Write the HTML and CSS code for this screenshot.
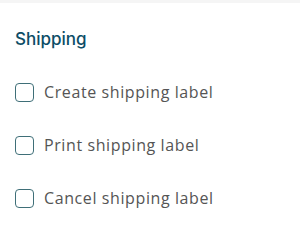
FILE: index.html
```html
<!DOCTYPE html>
<html lang="en">
<head>
    <meta charset="UTF-8">
    <meta name="viewport" content="width=device-width, initial-scale=1.0">
    <title>Shipping</title>
    <link rel="stylesheet" href="styles.css">
</head>
<body>
    <div class="topbar"></div>
    <div class="panel">
        <h2>Shipping</h2>
        <label class="option"><input type="checkbox"><span class="box"></span>Create shipping label</label>
        <label class="option"><input type="checkbox"><span class="box"></span>Print shipping label</label>
        <label class="option"><input type="checkbox"><span class="box"></span>Cancel shipping label</label>
    </div>
</body>
</html>
```
FILE: styles.css
```css
body {
    margin: 0;
    font-family: "Open Sans", sans-serif;
    background-color: #fff;
}
.topbar {
    height: 3px;
    background-color: #f5f5f5;
}
.panel {
    padding: 25px 15px 0 15px;
}
h2 {
    margin: 0 0 32px 0;
    font-family: Inter, sans-serif;
    font-size: 17px;
    font-weight: 500;
    color: #0c4d66;
    line-height: 22px;
}
.option {
    display: flex;
    align-items: center;
    gap: 10px;
    height: 20px;
    margin-bottom: 33px;
    font-size: 16px;
    letter-spacing: 0.6px;
    color: #555;
    cursor: pointer;
}
.option input {
    display: none;
}
.box {
    width: 17px;
    height: 17px;
    border: 1.5px solid #3f6f78;
    border-radius: 4px;
}
```
